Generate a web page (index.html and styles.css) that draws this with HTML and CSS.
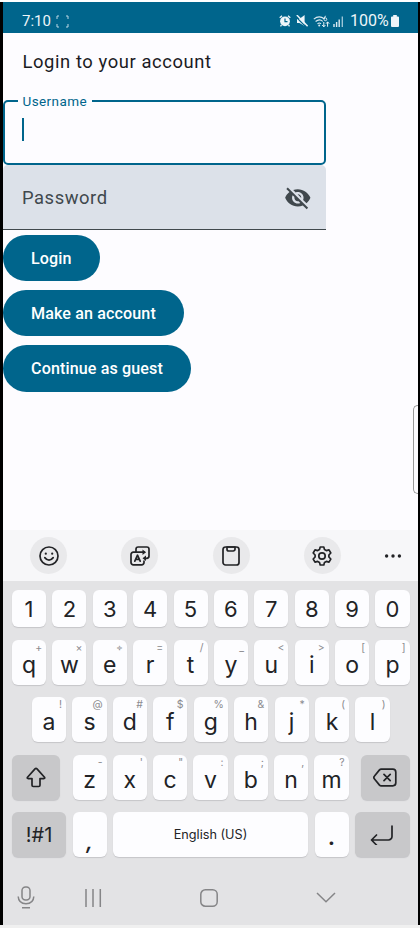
FILE: index.html
```html
<!DOCTYPE html>
<html lang="en">
<head>
<meta charset="utf-8">
<title>Login</title>
<link rel="stylesheet" href="styles.css">
</head>
<body>
<div class="device">
  <header class="status">
    <span class="time">7:10</span>
    <svg class="capture" width="13" height="13" viewBox="0 0 13 13"><path d="M1 4V1h2M10 1h2v3M12 9v3h-2M3 12H1V9"/></svg>
    <div class="status-icons">
      <svg width="12" height="12" viewBox="0 0 12 12"><path d="M.7 2.8 3 .8M9 .8l2.3 2M2.5 10l-1 1.3M9.5 10l1 1.3" stroke="#eef5f9" stroke-width="1.3"/><circle cx="6" cy="6.3" r="4.9" fill="#eef5f9"/><path d="M6 3.4v3.2h2.5" fill="none" stroke="#00658c" stroke-width="1.2"/></svg>
      <svg width="12" height="12" viewBox="0 0 12 12"><path d="M1 4h2.4L8.600 0v11L3.400 8H1z" fill="#eef5f9"/><path d="M0 1.800 10 12" stroke="#00658c" stroke-width="1.2"/><path d="m.8 0 10.800 11.200" stroke="#eef5f9" stroke-width="1.4"/></svg>
      <svg class="wifi" width="17" height="13" viewBox="0 0 17 13"><path d="M.8 4.200q5.200-4.400 10.400-.4M2.600 6.500q3.800-3.200 7.200-.2M4.500 8.800q1.800-1.500 3.500 0" fill="none" stroke="#dcebf2" stroke-width="1.1"/><circle cx="6.200" cy="10.500" r="1" fill="#dcebf2"/><circle cx="12.400" cy="4.300" r="1.400" fill="none" stroke="#dcebf2"/><path d="M12.500 .8 11 3.800M10.800 7v4.800M9.200 10l1.600 1.800 1.600-1.800M14.600 11.700V6.900M13 8.700l1.600-1.800 1.600 1.800" fill="none" stroke="#eef5f9" stroke-width="1"/></svg>
      <svg class="signal" width="11" height="11" viewBox="0 0 11 11"><path d="M1 8v3M3.600 6v5M6.200 3.500V11" stroke="#dcebf2" stroke-width="1.4"/><path d="M9.300.5V11" stroke="#a5cbdc" stroke-width="1.3"/></svg>
      <span class="percent">100%</span>
      <svg class="battery" width="8" height="12" viewBox="0 0 8 12"><path d="M2.200 0h3.600v1.400H7a1 1 0 0 1 1 1V11a1 1 0 0 1-1 1H1a1 1 0 0 1-1-1V2.400a1 1 0 0 1 1-1h1.200z" fill="#eef5f9"/></svg>
    </div>
  </header>

  <main class="content">
    <h1>Login to your account</h1>
    <fieldset class="username"><legend>Username</legend><div class="caret"></div></fieldset>
    <div class="password">
      <span>Password</span>
      <svg width="27.6" height="27.6" viewBox="0 0 24 24" fill="#40484d"><path d="M12 7c2.76 0 5 2.24 5 5 0 .65-.13 1.26-.36 1.83l2.92 2.92c1.51-1.26 2.7-2.89 3.43-4.75-1.73-4.39-6-7.5-11-7.5-1.4 0-2.74.25-3.98.7l2.16 2.16C10.74 7.13 11.35 7 12 7zM2 4.27l2.28 2.28.46.46C3.08 8.3 1.78 10.02 1 12c1.73 4.39 6 7.5 11 7.5 1.55 0 3.03-.3 4.38-.84l.42.42L19.73 22 21 20.73 3.27 3 2 4.27zM7.53 9.8l1.55 1.55c-.05.21-.08.43-.08.65 0 1.66 1.34 3 3 3 .22 0 .44-.03.65-.08l1.55 1.55c-.67.33-1.41.53-2.2.53-2.76 0-5-2.24-5-5 0-.79.2-1.53.53-2.2zm4.31-.78 3.15 3.15.02-.16c0-1.66-1.34-3-3-3l-.17.01z"/></svg>
    </div>
    <div class="actions">
      <button class="login">Login</button>
      <button class="register">Make an account</button>
      <button class="guest">Continue as guest</button>
    </div>
    <div class="edge-handle"></div>
  </main>

  <section class="keyboard">
    <div class="tools">
      <span class="tool"><svg width="20" height="20" viewBox="0 0 20 20"><circle cx="10" cy="10" r="9"/><path d="M5.800 11.600q4.200 5.200 8.400 0"/><circle class="solid" cx="6.800" cy="7.700" r="1.1"/><circle class="solid" cx="13.200" cy="7.700" r="1.1"/></svg></span>
      <span class="tool"><svg width="20" height="20" viewBox="0 0 20 20"><path d="M14 15v1.500a2.300 2.300 0 0 1-2.300 2.300H3.300A2.300 2.300 0 0 1 1 16.500v-8a2.300 2.300 0 0 1 2.300-2.300H14.500M6 5.800V3.200A2.200 2.200 0 0 1 8.200 1h8.600A2.200 2.200 0 0 1 19 3.200V10a2.300 2.300 0 0 1-2.300 2.300H15.500M4.800 15.200l2.700-6 2.700 6M5.700 13.400h3.600"/><path class="solid" d="m12.500 3.500 3.500 2.700-3.500 2.700zM16 9.600l-3.500 2.700L16 15z"/></svg></span>
      <span class="tool"><svg width="20" height="20" viewBox="0 0 20 20"><rect x="2" y="1" width="16" height="18" rx="2.600"/><path d="M6 1v2.200A1.800 1.800 0 0 0 7.800 5h4.400A1.800 1.800 0 0 0 14 3.200V1z"/></svg></span>
      <span class="tool"><svg width="20" height="20" viewBox="0 0 20 20"><path d="M8.200 1h3.600l.7 2.600 1.800 1 2.700-.7 1.800 3.100-1.900 2v2l1.900 2-1.800 3.100-2.700-.7-1.800 1-.7 2.600H8.200l-.7-2.600-1.800-1-2.700.7L1.200 13l1.900-2V9L1.200 7 3 3.900l2.700.7 1.800-1z"/><circle cx="10" cy="10" r="3.200"/></svg></span>
      <svg class="more" width="18" height="4" viewBox="0 0 18 4"><circle cx="2.600" cy="2" r="1.700"/><circle cx="9" cy="2" r="1.700"/><circle cx="15.400" cy="2" r="1.700"/></svg>
    </div>
    <div class="keys">
      <div class="row numbers"><kbd>1</kbd><kbd>2</kbd><kbd>3</kbd><kbd>4</kbd><kbd>5</kbd><kbd>6</kbd><kbd>7</kbd><kbd>8</kbd><kbd>9</kbd><kbd>0</kbd></div>
      <div class="row"><kbd>q<sup>+</sup></kbd><kbd>w<sup>×</sup></kbd><kbd>e<sup>÷</sup></kbd><kbd>r<sup>=</sup></kbd><kbd>t<sup>/</sup></kbd><kbd>y<sup>_</sup></kbd><kbd>u<sup>&lt;</sup></kbd><kbd>i<sup>&gt;</sup></kbd><kbd>o<sup>[</sup></kbd><kbd>p<sup>]</sup></kbd></div>
      <div class="row home"><kbd>a<sup>!</sup></kbd><kbd>s<sup>@</sup></kbd><kbd>d<sup>#</sup></kbd><kbd>f<sup>$</sup></kbd><kbd>g<sup>%</sup></kbd><kbd>h<sup>&amp;</sup></kbd><kbd>j<sup>*</sup></kbd><kbd>k<sup>(</sup></kbd><kbd>l<sup>)</sup></kbd></div>
      <div class="row lower">
        <kbd class="fn"><svg width="20" height="21" viewBox="0 0 20 21"><path d="M9 1.900 1.500 10.200q-.8 1.300.7 1.400H6v6.600a1.300 1.300 0 0 0 1.300 1.300h5.400a1.300 1.300 0 0 0 1.300-1.300v-6.600h3.800q1.500-.1.700-1.400L11 1.900q-1-1-2 0z"/></svg></kbd>
        <div class="letters"><kbd>z<sup>-</sup></kbd><kbd>x<sup>'</sup></kbd><kbd>c<sup>"</sup></kbd><kbd>v<sup>:</sup></kbd><kbd>b<sup>;</sup></kbd><kbd>n<sup>,</sup></kbd><kbd>m<sup>?</sup></kbd></div>
        <kbd class="fn"><svg width="24" height="19" viewBox="0 0 24 19"><path d="M8.200 1.200h11.600a3 3 0 0 1 3 3v10.600a3 3 0 0 1-3 3H8.200q-1 0-1.700-.7L1.500 11q-1.300-1.500 0-3l5-6.100q.7-.7 1.700-.7zM11 6.400l6.200 6.200M17.200 6.400l-6.200 6.200"/></svg></kbd>
      </div>
      <div class="row bottom">
        <kbd class="fn symbols">!#1</kbd><kbd class="comma">,</kbd><kbd class="space">English (US)</kbd><kbd class="period">.</kbd>
        <kbd class="fn"><svg width="24" height="20" viewBox="0 0 24 20"><path d="M22 1v10.500a3.500 3.500 0 0 1-3.500 3.500H2M6.500 10 1.500 15l5 5"/></svg></kbd>
      </div>
    </div>
    <nav class="system-nav">
      <svg class="mic" width="18" height="23" viewBox="0 0 18 23"><rect x="5" y="1" width="8" height="13" rx="3.500"/><path d="M1.200 10.500q.4 7.200 7.800 7.200t7.800-7.200M5 21.800h8"/></svg>
      <svg class="recents" width="18" height="18" viewBox="0 0 18 18"><path d="M2 0v18M9 0v18M16.300 0v18"/></svg>
      <svg class="home-button" width="18" height="18" viewBox="0 0 18 18"><rect x=".8" y=".8" width="16.400" height="16.400" rx="4.500"/></svg>
      <svg class="hide" width="20" height="11" viewBox="0 0 20 11"><path d="m1 1 9 8.700L19 1"/></svg>
    </nav>
  </section>
</div>
</body>
</html>
```

FILE: styles.css
```css
* { box-sizing: border-box; }
body { margin: 0; background: #f0f0f0; font-family: Roboto, sans-serif; }
svg { display: block; flex: none; }
.device {
  display: flex; flex-direction: column;
  width: 420px; height: 925px;
  border-top: 2px solid #fff;
  background: linear-gradient(90deg, #000 3px, #fdfcff 3px 418px, #000 418px);
  padding: 0 2px 0 3px;
}
.status {
  display: flex; align-items: center;
  height: 31px; padding: 7px 19px 0 19px;
  background: #00658c; color: #eef5f9;
  line-height: 22px;
}
.time { width: 29px; font-size: 15px; }
.capture { margin-left: 5px; fill: none; stroke: #bcd8e4; stroke-width: 1; }
.status-icons { display: flex; align-items: center; margin-left: auto; }
.status-icons svg + svg { margin-left: 5px; }
.status-icons .signal { margin-left: 3px; }
.percent { width: 40px; margin: 0 1px 0 6px; font-size: 16px; }

.content { position: relative; height: 497px; }
h1 {
  margin: 0; padding: 17px 0 0 19.500px; height: 61px;
  font-size: 18.400px; line-height: 24px; font-weight: 400; letter-spacing: .58px; color: #1b1b1f;
}
.username {
  width: 323px; height: 71px; margin: 0; padding: 0 0 0 16.500px;
  border: 2.500px solid #00658c; border-radius: 5px;
}
.username legend {
  margin-left: -4px; padding: 0 5px;
  font-size: 13.500px; line-height: 14px; letter-spacing: .4px; color: #00658c;
}
.caret { width: 2px; height: 23px; margin-top: 10px; background: #00658c; }
.password {
  display: flex; align-items: center; justify-content: space-between;
  width: 323px; height: 65px; padding: 1px 14px 0 19px;
  border-bottom: 1px solid #40484d; border-radius: 5px 5px 0 0;
  background: #dce1e9; color: #40484d;
  font-size: 18.400px; letter-spacing: .55px;
}
.actions { display: flex; flex-direction: column; align-items: flex-start; gap: 9px; padding-top: 5px; }
button {
  height: 46.200px; padding: 0 0 0 28px; border: 0; border-radius: 24px;
  background: #00658c; color: #fff; text-align: left;
  font: 500 16.100px Roboto, sans-serif; letter-spacing: .12px;
}
.login { width: 97px; }
.register { width: 181px; }
.guest { width: 188px; }
.edge-handle {
  position: absolute; right: 0; top: 372px; width: 5px; height: 89px;
  border: 1px solid #999; border-right: 0; border-radius: 5px 0 0 5px;
}

.keyboard { display: flex; flex-direction: column; height: 395px; background: #e3e3e5; color: #222326; }
.tools { display: flex; align-items: center; height: 51px; padding: 0 16px 0 27.200px; background: #f7f7f9; }
.tool {
  display: flex; align-items: center; justify-content: center;
  width: 37px; height: 37px; margin-right: 54.200px; border-radius: 50%; background: #e9e9eb;
}
.tool svg, .fn svg { fill: none; stroke: #222326; stroke-width: 1.700; stroke-linejoin: round; stroke-linecap: round; }
.tool .solid { fill: #222326; stroke: none; }
.tool:nth-child(4) { margin-right: 0; }
.more { margin-left: auto; fill: #222326; }
.keys { display: flex; flex-direction: column; gap: 12.500px; padding: 9px 8.500px 0 9px; }
.row { display: grid; grid-template-columns: repeat(10, 1fr); column-gap: 6.300px; height: 45px; }
.numbers { height: 37px; }
.home { grid-template-columns: repeat(9, 1fr); padding: 0 20px; }
.lower { grid-template-columns: 48px 276px 48.500px; column-gap: 12.500px; }
.letters { display: grid; grid-template-columns: repeat(7, 1fr); column-gap: 6.300px; }
.bottom { grid-template-columns: 54px 34px 195px 34px 54.500px; column-gap: 6.500px; }
kbd {
  position: relative; display: flex; align-items: center; justify-content: center;
  padding-top: 5px; border-radius: 6px;
  background: #fdfdff; box-shadow: 0 1px 1px #c5c5c8;
  font: 400 23px/20px Inter, sans-serif;
}
.numbers kbd { padding: 1px 0 0; font-size: 22px; }
sup { position: absolute; top: 2px; right: 4px; font-size: 10.500px; line-height: 11px; color: #8b8b8f; }
kbd.fn { padding: 0; background: #c8c8ca; }
kbd.symbols { font-size: 20px; }
kbd.space { padding: 0; font-size: 12.700px; }
kbd.comma { padding-top: 14px; font-weight: 600; font-size: 21px; font-style: italic; }
kbd.period { padding-top: 5px; font-weight: 600; }
.system-nav { display: flex; align-items: center; padding: 29px 0 0 14px; }
.system-nav svg { fill: none; stroke: #858587; stroke-width: 1.500; }
.recents { margin-left: 49px; }
.home-button { margin-left: 98px; }
.hide { margin-left: 98px; }
```
